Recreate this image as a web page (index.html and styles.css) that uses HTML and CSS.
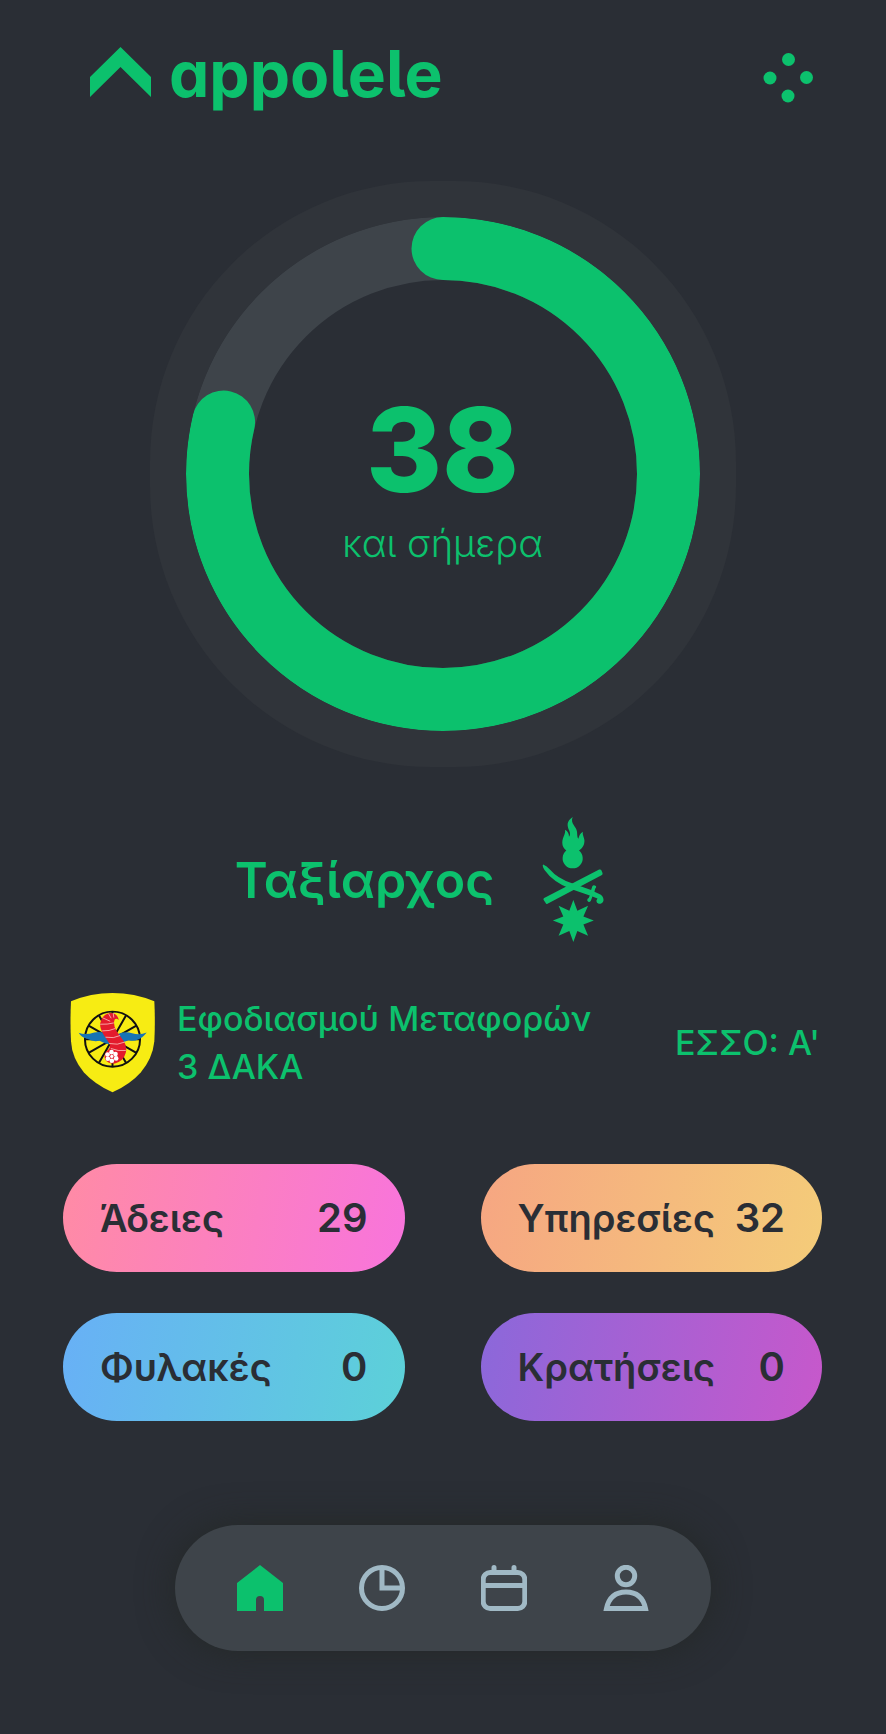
FILE: index.html
```html
<!DOCTYPE html>
<html lang="el">
<head>
    <meta charset="UTF-8">
    <meta name="viewport" content="width=device-width, initial-scale=1.0">
    <title>appolele</title>
    <link rel="stylesheet" href="styles.css">
</head>
<body>
    <header class="header">
        <a class="brand" href="#">
            <svg class="brand-mark" viewBox="0 0 61 50" aria-hidden="true">
                <path d="M0 50V30L30.5 0 61 30V50L30.5 20Z"/>
            </svg>
            <span class="brand-name">appolele</span>
        </a>
        <button class="menu-button" type="button" aria-label="Μενού">
            <svg viewBox="0 0 50 50" aria-hidden="true">
                <circle cx="25.500" cy="6.500" r="6.500"/>
                <circle cx="7" cy="25" r="6.500"/>
                <circle cx="43.500" cy="24.500" r="6.500"/>
                <circle cx="25" cy="43" r="6.500"/>
            </svg>
        </button>
    </header>

    <main class="content">
        <section class="counter">
            <svg class="ring" viewBox="0 0 514 514" aria-hidden="true">
                <circle class="ring-track" cx="257" cy="257" r="225.500"/>
                <circle class="ring-value" cx="257" cy="257" r="225.500" pathLength="1000" stroke-dasharray="787 1000" transform="rotate(-90 257 257)"/>
            </svg>
            <div class="counter-text">
                <strong class="days">38</strong>
                <span class="days-label">και σήμερα</span>
            </div>
        </section>

        <section class="rank">
            <h1>Ταξίαρχος</h1>
            <svg class="insignia" viewBox="66 50 184 373" aria-hidden="true">
                <!-- Flame and grenade -->
                <path d="M157 50C138 63 140 76 147 91C150 98 150 105 146 109C146 99 143 93 134 88C137 101 126 110 126 127C126 138 131 145 138 150A30 30 0 1 0 176 150C187 144 193 132 192 119C191 110 186 103 187 94C179 99 176 106 174 115C170 110 171 103 170 94C168 78 149 70 157 50Z"/>
                <!-- Baton -->
                <path d="M72 292L236 207Q241 205 243 210L246 217Q248 221 243 224L82 309Q78 311 76 306L70 297Q69 294 72 292Z"/>
                <!-- Sabre -->
                <path d="M69 192Q80 196 89 207Q112 234 155 248L212 268L216 256Q220 251 226 256Q229 260 224 264L222 273L235 279Q250 285 249 299Q247 309 235 309Q227 306 228 299L231 293L216 287L211 301Q205 307 201 300Q199 295 205 292L208 284L152 265Q98 244 73 208Q65 195 69 192Z"/>
                <!-- Star -->
                <path d="M159 298L171 330L203 315L189 347L220 359L189 371L203 404L171 390L159 423L147 390L115 404L129 371L98 359L129 347L115 315L147 330Z"/>
            </svg>
        </section>

        <section class="unit">
            <svg class="shield" viewBox="30 34 256 302" aria-hidden="true">
                <path fill="#f7ec13" d="M33 61Q92 36 158 36Q224 36 284 61Q287 122 284 181Q279 232 243 275Q212 310 158 335Q104 310 72 275Q36 232 33 181Q30 122 33 61Z"/>
                <g fill="none" stroke="#111" stroke-width="6">
                    <circle cx="158" cy="175" r="83"/>
                    <path d="M158 92V258M75 175H241M117 103L199 247M199 103L117 247M86 134L230 216M230 134L86 216"/>
                </g>
                <path fill="#1673b4" d="M56 156Q77 164 103 155Q131 149 158 169Q188 147 217 157Q240 164 261 155Q248 172 235 176Q223 183 207 178Q183 188 158 191Q137 191 119 180Q98 184 82 174Q65 171 56 156Z"/>
                <path fill="#e31b2d" d="M177 117Q172 95 150 96Q126 101 121 127Q119 142 132 163L149 189Q154 202 140 211Q131 222 136 236Q145 250 165 248Q191 242 198 216Q203 194 190 178L170 150Q161 136 163 121Q165 109 177 117Z"/>
                <path fill="none" stroke="#ffe8df" stroke-width="2" d="M146 98L154 112M160 96L162 110M129 111L151 121M121 130Q143 131 162 126M127 150Q149 151 166 143M137 169Q162 174 181 164M148 188Q174 194 194 184M153 203Q175 212 198 209"/>
                <g fill="#fff">
                    <circle cx="155" cy="214" r="7"/>
                    <circle cx="167" cy="220" r="7"/>
                    <circle cx="169" cy="233" r="7"/>
                    <circle cx="156" cy="240" r="7"/>
                    <circle cx="144" cy="234" r="7"/>
                    <circle cx="143" cy="221" r="7"/>
                    <circle cx="156" cy="227" r="5"/>
                </g>
            </svg>
            <p class="unit-name">Εφοδιασμού Μεταφορών<br>3 ΔΑΚΑ</p>
            <p class="esso">ΕΣΣΟ: Α'</p>
        </section>

        <section class="stats">
            <a class="stat stat-leave" href="#"><span>Άδειες</span><span class="stat-value">29</span></a>
            <a class="stat stat-duty" href="#"><span>Υπηρεσίες</span><span class="stat-value">32</span></a>
            <a class="stat stat-guard" href="#"><span>Φυλακές</span><span class="stat-value">0</span></a>
            <a class="stat stat-detention" href="#"><span>Κρατήσεις</span><span class="stat-value">0</span></a>
        </section>
    </main>

    <nav class="tabbar">
        <a class="tab active" href="#" aria-label="Αρχική" aria-current="page">
            <svg viewBox="0 0 46 46" aria-hidden="true">
                <path fill="currentColor" d="M23 0L46 18V46H27V35Q27 31 23 31Q19 31 19 35V46H0V18Z"/>
            </svg>
        </a>
        <a class="tab" href="#" aria-label="Στατιστικά">
            <svg viewBox="0 0 46 46" aria-hidden="true">
                <circle cx="23" cy="23" r="20.500"/>
                <path d="M23 2V23H44"/>
            </svg>
        </a>
        <a class="tab" href="#" aria-label="Ημερολόγιο">
            <svg viewBox="0 0 46 46" aria-hidden="true">
                <rect x="2.200" y="7.500" width="41.600" height="36" rx="7"/>
                <path d="M2 20.500H44"/>
                <path stroke-linecap="round" d="M13 2.500V7M33 2.500V7"/>
            </svg>
        </a>
        <a class="tab" href="#" aria-label="Προφίλ">
            <svg viewBox="0 0 46 46" aria-hidden="true">
                <circle cx="23" cy="11" r="8.700"/>
                <path d="M3.500 43.500Q7 27 23 27Q39 27 42.500 43.500Z"/>
            </svg>
        </a>
    </nav>
</body>
</html>
```
FILE: styles.css
```css
* {
    box-sizing: border-box;
}
body {
    margin: 0;
    min-height: 100vh;
    background: #2a2e35;
    color: #0cc16d;
    font-family: Inter, "Noto Sans", sans-serif;
}
a {
    color: inherit;
    text-decoration: none;
}
h1, p {
    margin: 0;
}
svg {
    display: block;
}
.header {
    display: flex;
    justify-content: space-between;
    align-items: center;
    padding: 34px 73px 0 90px;
}
.brand {
    display: flex;
    align-items: center;
    gap: 18px;
}
.brand-mark {
    width: 61px;
    height: 50px;
    margin-bottom: 4px;
    fill: currentColor;
}
.brand-name {
    font-size: 64px;
    line-height: 80px;
    font-weight: 700;
    font-feature-settings: "cv11", "cv05";
}
.menu-button {
    width: 50px;
    height: 50px;
    margin-top: 8px;
    padding: 0;
    border: none;
    background: none;
    color: inherit;
    cursor: pointer;
}
.menu-button svg {
    fill: currentColor;
}
.content {
    padding: 67px 64px 0 63px;
}
.counter {
    display: grid;
    place-items: center;
    width: 586px;
    max-width: 100%;
    aspect-ratio: 1;
    margin: 0 auto;
    padding: 36px;
    border-radius: 48%;
    background: #30343a;
}
.ring,
.counter-text {
    grid-area: 1 / 1;
}
.ring {
    width: 100%;
    border-radius: 50%;
}
.ring circle {
    fill: #2a2e35;
    stroke-width: 63;
}
.ring .ring-track {
    stroke: #3e444a;
}
.ring .ring-value {
    fill: none;
    stroke: #0cc16d;
    stroke-linecap: round;
}
.counter-text {
    display: flex;
    flex-direction: column;
    align-items: center;
    gap: 5px;
    padding-top: 12px;
}
.days {
    font-size: 116px;
    line-height: 120px;
    font-weight: 800;
}
.days-label {
    font-size: 38px;
    line-height: 56px;
    font-weight: 300;
}
.rank {
    display: flex;
    justify-content: center;
    align-items: center;
    gap: 48px;
    margin: 50px 46px 0 0;
}
.rank h1 {
    font-size: 50px;
    line-height: 64px;
    font-weight: 600;
}
.insignia {
    width: 62px;
    height: 125px;
    fill: currentColor;
}
.unit {
    display: flex;
    align-items: center;
    gap: 22px;
    margin-top: 50px;
    padding: 0 2px 0 7px;
    font-size: 34px;
    line-height: 48px;
    font-weight: 500;
}
.shield {
    width: 85px;
    height: 101px;
}
.esso {
    margin-left: auto;
}
.stats {
    display: grid;
    grid-template-columns: 1fr 1fr;
    gap: 41px 76px;
    margin-top: 71px;
}
.stat {
    display: flex;
    justify-content: space-between;
    padding: 30px 37px;
    border-radius: 54px;
    color: #2a2e35;
    font-size: 38px;
    line-height: 48px;
    font-weight: 600;
}
.stat-value {
    font-size: 40px;
}
.stat-leave {
    background: linear-gradient(100deg, #ff8ba5, #f874dc);
}
.stat-duty {
    background: linear-gradient(100deg, #f6a682, #f4cc79);
}
.stat-guard {
    background: linear-gradient(100deg, #68b0f6, #5cd1d8);
}
.stat-detention {
    background: linear-gradient(100deg, #8b68da, #c758cb);
}
.tabbar {
    display: flex;
    justify-content: center;
    gap: 76px;
    width: fit-content;
    margin: 104px auto 0;
    padding: 40px 62px;
    border-radius: 63px;
    background: #3e444a;
    box-shadow: 0 0 36px rgba(36, 40, 38, 0.9);
}
.tab {
    color: #a0b9c5;
}
.tab svg {
    width: 46px;
    height: 46px;
    fill: none;
    stroke: currentColor;
    stroke-width: 5;
}
.tab.active {
    color: #0cc16d;
}
.tab.active svg {
    stroke: none;
}
```
